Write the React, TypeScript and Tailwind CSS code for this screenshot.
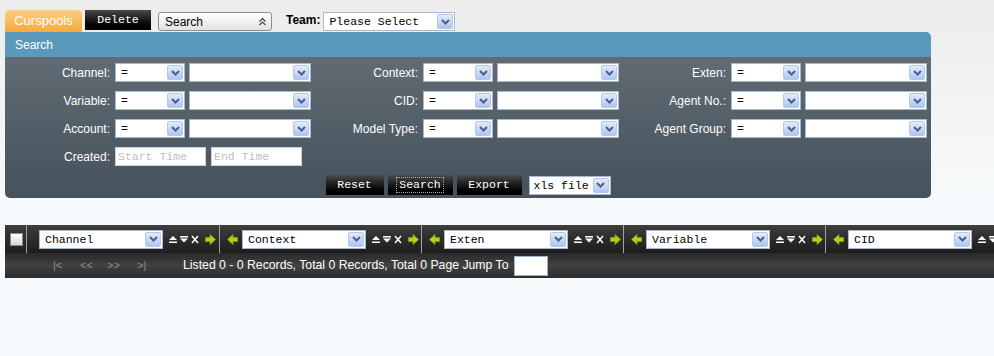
import React from "react";

const mono = "font-['Liberation_Mono',monospace] text-[11.5px]";

function DropArrow() {
  return (
    <span className="flex h-full w-[16px] items-center justify-center rounded-[2px] border border-[#b6c8ea] bg-gradient-to-b from-[#e1ebfd] to-[#b0c5ef]">
      <svg width="9" height="6" viewBox="0 0 9 6">
        <path d="M1 1 L4.5 4.5 L8 1" stroke="#4b5f8b" strokeWidth="2" fill="none" />
      </svg>
    </span>
  );
}

function Select({ w, text, pad = "pl-[4px]" }: { w: string; text?: string; pad?: string }) {
  return (
    <div className={`flex h-[19px] shrink-0 ${w} items-stretch border border-[#a7b9cf] bg-white p-[1px]`}>
      <span className={`flex-1 ${pad} leading-[15px] text-black ${mono}`}>{text}</span>
      <DropArrow />
    </div>
  );
}

function Field({ label }: { label: string }) {
  return (
    <div className="flex w-[308px] items-center">
      <span className="w-[106px] pr-[1px] text-right text-[12px] text-white">{label}</span>
      <div className="ml-[4px]">
        <Select w="w-[70px]" text="=" />
      </div>
      <div className="ml-[4px]">
        <Select w="w-[122px]" />
      </div>
    </div>
  );
}

function BlackButton({ w, children, focus }: { w: string; children: React.ReactNode; focus?: boolean }) {
  return (
    <div
      className={`flex h-[20px] ${w} items-center justify-center bg-gradient-to-b from-[#4a4a4a] via-[#1a1a1a] to-[#000] text-white ${mono}`}
    >
      <span className={focus ? "border border-dotted border-[#aaa] px-[2px] leading-[14px]" : ""}>{children}</span>
    </div>
  );
}

function GreenArrow({ dir }: { dir: "l" | "r" }) {
  return (
    <svg width="11" height="11" viewBox="0 0 11 11" className="shrink-0">
      <polygon
        points={dir === "r" ? "0.5,3.5 5,3.5 5,0.5 10.5,5.5 5,10.5 5,7.5 0.5,7.5" : "10.5,3.5 6,3.5 6,0.5 0.5,5.5 6,10.5 6,7.5 10.5,7.5"}
        fill="#a9d41a"
        stroke="#7fa80e"
        strokeWidth="0.8"
      />
    </svg>
  );
}

function SortIcons() {
  return (
    <div className="flex items-center gap-[3px]">
      <svg width="8" height="9" viewBox="0 0 8 9">
        <polygon points="0,5 4,1 8,5" fill="#fff" />
        <rect x="0" y="6.5" width="8" height="1.5" fill="#fff" />
      </svg>
      <svg width="8" height="9" viewBox="0 0 8 9">
        <rect x="0" y="1" width="8" height="1.5" fill="#fff" />
        <polygon points="0,3.5 8,3.5 4,7.5" fill="#fff" />
      </svg>
      <svg width="8" height="9" viewBox="0 0 8 9">
        <path d="M1 1 L7 8 M7 1 L1 8" stroke="#fff" strokeWidth="1.5" />
      </svg>
    </div>
  );
}

function ColCell({ name, first }: { name: string; first?: boolean }) {
  return (
    <>
      <div className={`flex h-full shrink-0 items-center ${first ? "w-[192px] pl-[12px]" : "w-[201px] pl-[7px]"}`}>
        {!first && (
          <div className="mr-[4px]">
            <GreenArrow dir="l" />
          </div>
        )}
        <Select w="w-[124px]" text={name} pad="pl-[4px]" />
        <div className="ml-[6px]">
          <SortIcons />
        </div>
        <div className="ml-[6px]">
          <GreenArrow dir="r" />
        </div>
      </div>
      <div className="h-full w-px shrink-0 bg-[#a3a3a3]" />
    </>
  );
}

export default function App() {
  return (
    <div className="h-[356px] w-[994px] overflow-hidden bg-[linear-gradient(to_bottom,#ececec_0%,#f4f6f7_40%,#f8fbfd_62%)] font-['Liberation_Sans',Arial,sans-serif]">
      {/* top bar */}
      <div className="flex items-end pl-[5px] pt-[10px]">
        <div className="flex h-[22px] w-[77px] items-center justify-center rounded-t-[5px] bg-gradient-to-b from-[#fbcd7e] to-[#f5a93c] text-[13px] text-white">
          Curspools
        </div>
        <div className="mb-[2px] ml-[3px]">
          <BlackButton w="w-[66px]">Delete</BlackButton>
        </div>
        <div className="mb-[1px] ml-[7px] flex h-[19px] w-[114px] items-center justify-between rounded-[3px] border border-[#8d8d8d] bg-gradient-to-b from-[#ffffff] to-[#e2e2e2] pl-[6px] pr-[4px] text-[12px] text-black">
          <span>Search</span>
          <svg width="9" height="9" viewBox="0 0 9 9">
            <path d="M1.5 4.5 L4.5 1.5 L7.5 4.5 M1.5 8 L4.5 5 L7.5 8" stroke="#444" strokeWidth="1.2" fill="none" />
          </svg>
        </div>
        <span className="mb-[3px] ml-[14px] text-[12px] font-bold text-black">Team:</span>
        <div className="mb-[1px] ml-[3px]">
          <Select w="w-[132px]" text="Please Select" />
        </div>
      </div>

      {/* search panel */}
      <div className="ml-[5px] w-[926px] overflow-hidden rounded-b-[5px] rounded-tr-[5px]">
        <div className="flex h-[25px] items-center bg-[#5a99bb] pl-[10px] text-[12px] text-white">Search</div>
        <div className="flex flex-col bg-gradient-to-b from-[#606b73] to-[#46525c] pb-[3px] pt-[6px]">
          <div className="flex flex-col gap-[9px]">
            <div className="flex">
              <Field label="Channel:" />
              <Field label="Context:" />
              <Field label="Exten:" />
            </div>
            <div className="flex">
              <Field label="Variable:" />
              <Field label="CID:" />
              <Field label="Agent No.:" />
            </div>
            <div className="flex">
              <Field label="Account:" />
              <Field label="Model Type:" />
              <Field label="Agent Group:" />
            </div>
            <div className="flex items-center">
              <span className="w-[106px] pr-[1px] text-right text-[12px] text-white">Created:</span>
              <div className={`ml-[4px] flex h-[19px] w-[91px] items-center border border-[#c9d2dc] bg-white pl-[2px] text-[#c0c0c0] ${mono}`}>
                Start Time
              </div>
              <div className={`ml-[5px] flex h-[19px] w-[91px] items-center border border-[#c9d2dc] bg-white pl-[2px] text-[#c0c0c0] ${mono}`}>
                End Time
              </div>
            </div>
          </div>
          <div className="mt-[9px] flex items-center justify-center gap-[4px]">
            <BlackButton w="w-[58px]">Reset</BlackButton>
            <BlackButton w="w-[65px]" focus>
              Search
            </BlackButton>
            <BlackButton w="w-[65px]">Export</BlackButton>
            <div className="ml-[3px]">
              <Select w="w-[82px]" text="xls file" pad="pl-[3px]" />
            </div>
          </div>
        </div>
      </div>

      {/* grid toolbar */}
      <div className="ml-[5px] mt-[27px] w-[989px] overflow-hidden">
        <div className="flex h-[28px] items-center bg-gradient-to-b from-[#3e3e3e] to-[#1d1d1d]">
          <div className="flex h-full w-[21px] shrink-0 items-center pl-[5px]">
            <div className="h-[13px] w-[13px] border border-[#8a8a8a] bg-gradient-to-b from-[#ffffff] to-[#d8d8d8]" />
          </div>
          <div className="h-full w-px shrink-0 bg-[#a3a3a3]" />
          <ColCell name="Channel" first />
          <ColCell name="Context" />
          <ColCell name="Exten" />
          <ColCell name="Variable" />
          <ColCell name="CID" />
        </div>
        <div className="flex h-[25px] items-center bg-gradient-to-b from-[#2a2a2a] via-[#414141] to-[#2c2c2c] text-[12.25px]">
          <span className="ml-[48px] w-[27px] text-[11px] text-[#8e8e8e]">|&lt;</span>
          <span className="w-[27px] text-[11px] text-[#8e8e8e]">&lt;&lt;</span>
          <span className="w-[30px] text-[11px] text-[#8e8e8e]">&gt;&gt;</span>
          <span className="w-[46px] text-[11px] text-[#8e8e8e]">&gt;|</span>
          <span className="text-white">Listed 0 - 0 Records, Total 0 Records, Total 0 Page Jump To</span>
          <div className="ml-[5px] h-[20px] w-[34px] border border-[#9fb3c8] bg-white" />
        </div>
      </div>
    </div>
  );
}
